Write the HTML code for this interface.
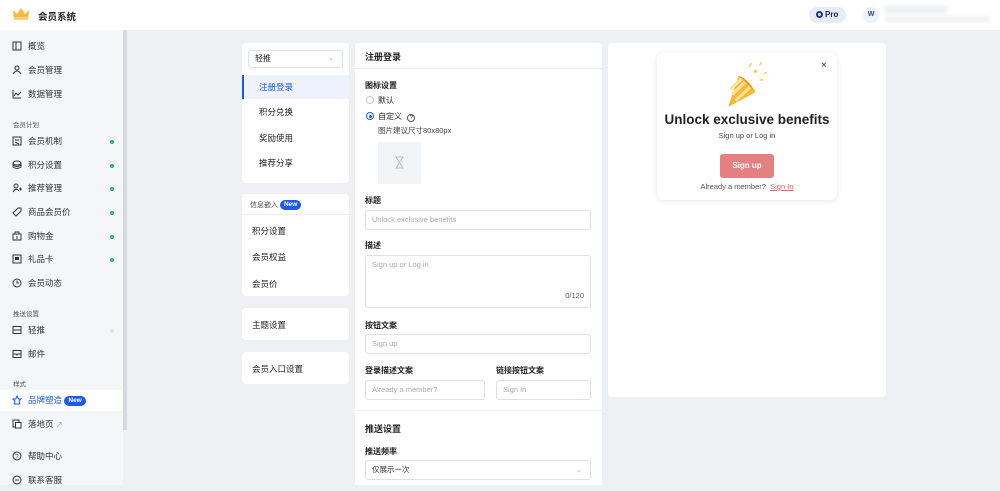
<!DOCTYPE html>
<html><head><meta charset="utf-8"><style>
*{box-sizing:border-box;margin:0;padding:0}
body{width:1000px;height:485px;overflow:hidden;font-family:"Liberation Sans","Noto Sans CJK SC",sans-serif;background:#eef0f3;position:relative;color:#222;font-size:8px}
.abs{position:absolute}
.hdr{left:0;top:0;width:1000px;height:30px;background:#fff}
.side{left:0;top:30px;width:123px;height:455px;background:#f5f6f8}
.sb{left:123px;top:30px;width:4px;height:400px;background:#d6d9de}
.it{position:absolute;left:0;width:123px;height:21px;line-height:21px;font-size:8.5px;color:#333;padding-left:28px}
.it svg{position:absolute;left:12px;top:5px}
.dot{position:absolute;left:110px;top:9px;width:4px;height:4px;border-radius:50%;background:#2bb673}
.lab{position:absolute;left:13px;font-size:6.5px;color:#555}
.card{position:absolute;background:#fff;border-radius:4px}
.new{display:inline-block;background:#1f5ae6;color:#fff;border-radius:7px;font-size:6.5px;padding:0 4px;line-height:10px;font-weight:bold;vertical-align:1px}
.li{position:absolute;left:10px;font-size:8.5px;color:#222}
.flab{position:absolute;left:365px;font-size:8px;font-weight:bold;color:#222}
.inp{position:absolute;border:1px solid #dcdfe4;border-radius:3px;background:#fff;font-size:7.5px;color:#aaa;padding-left:6px;line-height:18px}
</style></head><body>
<div class="abs hdr">
<svg class="abs" style="left:12px;top:7px" width="18" height="15" viewBox="0 0 18 15"><path d="M1 3 L5 7 L9 1 L13 7 L17 3 L16 13 L2 13Z" fill="#f5b941"/><rect x="2" y="10" width="14" height="3" fill="#f7d07a"/></svg>
<div class="abs" style="left:38px;top:9px;font-size:9.5px;font-weight:bold">会员系统</div>
<div class="abs" style="left:809px;top:7px;width:37px;height:16px;border-radius:8px;background:#e8ecf6;font-size:8px;font-weight:bold;color:#1a2a55;line-height:16px;padding-left:7px"><span style="display:inline-block;width:7px;height:7px;border:2px solid #1a3a8a;border-radius:50%;vertical-align:-1px;margin-right:2px"></span>Pro</div>
<div class="abs" style="left:863px;top:7px;width:16px;height:16px;border-radius:50%;background:#eef2fb;color:#2a4aa8;font-size:7px;font-weight:bold;text-align:center;line-height:16px">W</div>
<div class="abs" style="left:885px;top:6px;width:62px;height:7px;background:#ebedf0;filter:blur(2px)"></div>
<div class="abs" style="left:885px;top:16px;width:105px;height:6px;background:#eef0f2;filter:blur(2px)"></div>
</div>
<div class="abs side"></div>
<div class="abs sb"></div>
<div class="it" style="top:36px"><svg width="10" height="10"><rect x="1" y="1" width="8" height="8" fill="none" stroke="#333"/><line x1="4" y1="1" x2="4" y2="9" stroke="#333"/></svg>概览</div>
<div class="it" style="top:60px"><svg width="10" height="10"><circle cx="5" cy="3" r="2" fill="none" stroke="#333"/><path d="M1 9 Q5 3 9 9" fill="none" stroke="#333"/></svg>会员管理</div>
<div class="it" style="top:84px"><svg width="10" height="10"><path d="M1 1V9H9M2 7L4 4L6 6L9 3" fill="none" stroke="#333"/></svg>数据管理</div>
<div class="lab" style="top:119px">会员计划</div>
<div class="it" style="top:131px"><svg width="10" height="10"><rect x="1" y="1" width="8" height="8" fill="none" stroke="#333"/><path d="M3 4H7M3 6L7 8" stroke="#333"/></svg>会员机制<i class="dot"></i></div>
<div class="it" style="top:155px"><svg width="10" height="10"><ellipse cx="5" cy="3" rx="4" ry="2" fill="none" stroke="#333"/><path d="M1 3V7Q5 10 9 7V3M1 5Q5 8 9 5" fill="none" stroke="#333"/></svg>积分设置<i class="dot"></i></div>
<div class="it" style="top:178px"><svg width="10" height="10"><circle cx="4" cy="3" r="2" fill="none" stroke="#333"/><path d="M1 9Q4 4 7 8M7 6H10M8.5 4.5V7.5" fill="none" stroke="#333"/></svg>推荐管理<i class="dot"></i></div>
<div class="it" style="top:202px"><svg width="10" height="10"><path d="M1 6L6 1H9V4L4 9Z" fill="none" stroke="#333"/></svg>商品会员价<i class="dot"></i></div>
<div class="it" style="top:226px"><svg width="10" height="10"><rect x="1" y="3" width="8" height="6" fill="none" stroke="#333"/><path d="M3 3V1H7V3M5 5V8" stroke="#333" fill="none"/></svg>购物金<i class="dot"></i></div>
<div class="it" style="top:249px"><svg width="10" height="10"><rect x="1" y="1" width="8" height="8" fill="none" stroke="#333"/><rect x="3" y="3" width="4" height="3" fill="#333"/></svg>礼品卡<i class="dot"></i></div>
<div class="it" style="top:273px"><svg width="10" height="10"><circle cx="5" cy="5" r="4" fill="none" stroke="#333"/><path d="M5 2.5V5H7" fill="none" stroke="#333"/></svg>会员动态</div>
<div class="lab" style="top:308px">推送设置</div>
<div class="it" style="top:320px"><svg width="10" height="10"><rect x="1" y="1.5" width="8" height="7" fill="none" stroke="#333"/><line x1="1" y1="5" x2="9" y2="5" stroke="#333"/></svg>轻推<i class="dot" style="background:#e3e5e8"></i></div>
<div class="it" style="top:344px"><svg width="10" height="10"><rect x="1" y="1.5" width="8" height="7" fill="none" stroke="#333"/><path d="M1 5H4L5 6L6 5H9" fill="none" stroke="#333"/></svg>邮件</div>
<div class="lab" style="top:378px">样式</div>
<div class="it" style="top:390px;background:#fff;color:#1f5ae6"><svg width="10" height="10"><path d="M5 1L6.3 4H9L7 6L7.8 9H2.2L3 6L1 4H3.7Z" fill="none" stroke="#1f5ae6"/></svg>品牌塑造 <span class="new">New</span></div>
<div class="it" style="top:414px"><svg width="10" height="10"><rect x="1" y="1" width="6" height="7" fill="none" stroke="#333"/><rect x="3.5" y="3.5" width="5.5" height="5.5" fill="#fff" stroke="#333"/></svg>落地页 <span style="color:#999;font-size:7px">↗</span></div>
<div class="it" style="top:446px"><svg width="10" height="10"><circle cx="5" cy="5" r="4" fill="none" stroke="#333"/><text x="3.2" y="7.5" font-size="6" fill="#333">?</text></svg>帮助中心</div>
<div class="it" style="top:470px"><svg width="10" height="10"><circle cx="5" cy="5" r="4" fill="none" stroke="#333"/><path d="M3 5H7" stroke="#333"/></svg>联系客服</div>

<div class="card" style="left:242px;top:43px;width:107px;height:140px">
<div class="abs" style="left:6px;top:7px;width:95px;height:18px;border:1px solid #dcdfe4;border-radius:3px;font-size:8px;line-height:16px;padding-left:6px">轻推<span style="position:absolute;right:8px;color:#aaa;font-size:7px">⌄</span></div>
<div class="abs" style="left:0;top:32px;width:107px;height:24px;background:#edf2fd;border-left:2px solid #1f5ae6"></div>
<div class="li" style="left:17px;top:38px;color:#1f5ae6">注册登录</div>
<div class="li" style="left:17px;top:63px">积分兑换</div>
<div class="li" style="left:17px;top:89px">奖励使用</div>
<div class="li" style="left:17px;top:114px">推荐分享</div>
</div>
<div class="card" style="left:242px;top:194px;width:107px;height:102px">
<div class="abs" style="left:8px;top:6px;font-size:7px;color:#444">信息嵌入 <span class="new">New</span></div>
<div class="abs" style="left:0;top:20px;width:107px;border-top:1px solid #eee"></div>
<div class="li" style="top:31px">积分设置</div>
<div class="li" style="top:57px">会员权益</div>
<div class="li" style="top:84px">会员价</div>
</div>
<div class="card" style="left:242px;top:308px;width:107px;height:32px"><div class="li" style="top:11px">主题设置</div></div>
<div class="card" style="left:242px;top:352px;width:107px;height:32px"><div class="li" style="top:11px">会员入口设置</div></div>

<div class="card" style="left:355px;top:43px;width:247px;height:442px;border-radius:4px 4px 0 0">
<div class="abs" style="left:10px;top:7px;font-size:9px;font-weight:bold">注册登录</div>
<div class="abs" style="left:0;top:25px;width:247px;border-top:1px solid #eee"></div>
<div class="abs" style="left:0;top:367px;width:247px;border-top:1px solid #f2f2f2"></div>
</div>
<div class="flab" style="top:80px">图标设置</div>
<div class="abs" style="left:366px;top:96px;width:8px;height:8px;border:1px solid #ccc;border-radius:50%"></div>
<div class="abs" style="left:378px;top:95px;font-size:8px">默认</div>
<div class="abs" style="left:366px;top:112px;width:8px;height:8px;border:1px solid #1f5ae6;border-radius:50%;padding:1.5px"><div style="width:3px;height:3px;border-radius:50%;background:#1f5ae6"></div></div>
<div class="abs" style="left:378px;top:111px;font-size:8px">自定义 <span style="display:inline-block;width:8px;height:8px;border:1px solid #555;border-radius:50%;font-size:5.5px;text-align:center;line-height:6px;margin-left:3px">?</span></div>
<div class="abs" style="left:378px;top:125px;font-size:7.5px;color:#444">图片建议尺寸80x80px</div>
<div class="abs" style="left:378px;top:142px;width:43px;height:42px;background:#f3f4f6"><svg class="abs" style="left:17px;top:14px" width="9" height="13"><path d="M1 1H8L1 12H8Z" fill="none" stroke="#bbb"/></svg></div>
<div class="flab" style="top:195px">标题</div>
<div class="inp" style="left:365px;top:210px;width:226px;height:20px">Unlock exclusive benefits</div>
<div class="flab" style="top:240px">描述</div>
<div class="inp" style="left:365px;top:255px;width:226px;height:53px">Sign up or Log in<span class="abs" style="right:6px;bottom:2px;color:#555">0/120</span></div>
<div class="flab" style="top:320px">按钮文案</div>
<div class="inp" style="left:365px;top:334px;width:226px;height:20px">Sign up</div>
<div class="flab" style="top:365px">登录描述文案</div>
<div class="flab" style="left:496px;top:365px">链接按钮文案</div>
<div class="inp" style="left:365px;top:380px;width:120px;height:20px">Already a member?</div>
<div class="inp" style="left:496px;top:380px;width:95px;height:20px">Sign In</div>
<div class="flab" style="top:422px;font-size:9px">推送设置</div>
<div class="flab" style="top:446px">推送频率</div>
<div class="inp" style="left:365px;top:460px;width:226px;height:20px;color:#333">仅展示一次<span class="abs" style="right:8px;color:#aaa">⌄</span></div>

<div class="card" style="left:608px;top:43px;width:278px;height:354px"></div>
<div class="card" style="left:657px;top:53px;width:180px;height:147px;box-shadow:0 1px 6px rgba(0,0,0,.1);border-radius:6px">
<div class="abs" style="left:164px;top:7px;font-size:10px;color:#333">×</div>
<svg class="abs" style="left:66px;top:8px" width="48" height="50" viewBox="0 0 44 48"><path d="M4 44L14 14L30 30Z" fill="#f7b733"/><path d="M8 32L20 20M11 38L25 25M6 27L17 17" stroke="#fde39a" stroke-width="3"/><path d="M14 14Q24 18 30 30" fill="#e89a1a"/><circle cx="30" cy="10" r="1.5" fill="#f7c548"/><circle cx="36" cy="18" r="1.2" fill="#f7c548"/><path d="M24 6L26 2M34 4L36 1M38 12L41 11" stroke="#f7c548" stroke-width="1.2"/></svg>
<div class="abs" style="left:0;top:59px;width:180px;text-align:center;font-size:13.5px;font-weight:bold;color:#222">Unlock exclusive benefits</div>
<div class="abs" style="left:0;top:78px;width:180px;text-align:center;font-size:7.5px;color:#444">Sign up or Log in</div>
<div class="abs" style="left:63px;top:101px;width:54px;height:24px;background:#e47f82;border-radius:3px;color:#fff;font-size:8px;font-weight:bold;text-align:center;line-height:24px">Sign up</div>
<div class="abs" style="left:0;top:129px;width:180px;text-align:center;font-size:7.5px;color:#555">Already a member? &nbsp;<span style="color:#e0666b;text-decoration:underline">Sign In</span></div>
</div>
</body></html>
